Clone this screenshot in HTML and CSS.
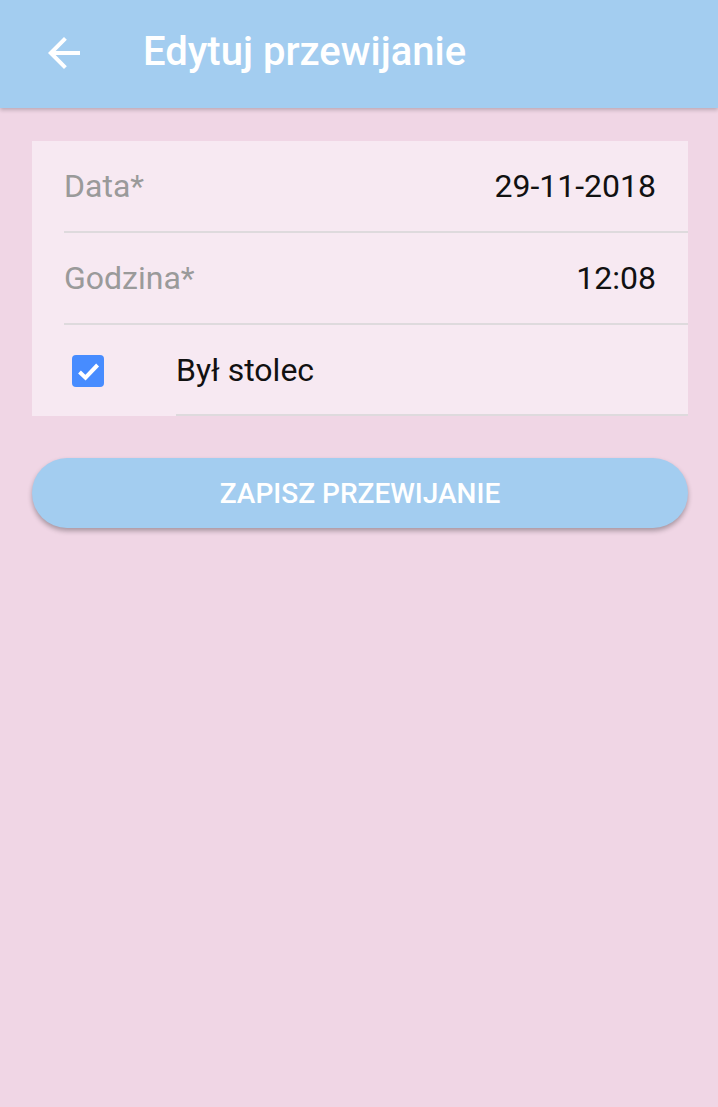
FILE: index.html
```html
<!DOCTYPE html>
<html lang="pl">
<head>
<meta charset="utf-8">
<title>Edytuj przewijanie</title>
<link rel="stylesheet" href="styles.css">
</head>
<body>
<header class="appbar">
  <button class="back" aria-label="Wstecz">
    <svg width="48" height="48" viewBox="0 0 24 24"><path fill="#fff" d="M20 11H7.83l5.59-5.59L12 4l-8 8 8 8 1.41-1.41L7.83 13H20v-2z"/></svg>
  </button>
  <h1 class="title">Edytuj przewijanie</h1>
</header>
<main class="content">
  <section class="card">
    <div class="row">
      <span class="label">Data*</span>
      <span class="value">29-11-2018</span>
    </div>
    <div class="row">
      <span class="label">Godzina*</span>
      <span class="value">12:08</span>
    </div>
    <div class="check-row">
      <div class="check-lead">
        <span class="checkbox">
          <svg width="32" height="32" viewBox="0 0 32 32"><path d="M7.5 17l6 5.6L25.6 10" fill="none" stroke="#fff" stroke-width="4"/></svg>
        </span>
      </div>
      <div class="check-title">Był stolec</div>
    </div>
  </section>
  <button class="save">ZAPISZ PRZEWIJANIE</button>
</main>
</body>
</html>
```
FILE: styles.css
```css
html, body {
  margin: 0;
  padding: 0;
}
body {
  background: #f0d6e5;
  font-family: Roboto, "Liberation Sans", sans-serif;
  width: 718px;
  min-height: 1107px;
}
.appbar {
  height: 108px;
  background: #a3cdf0;
  display: flex;
  align-items: center;
  box-shadow: 0 2px 4px rgba(0, 0, 0, 0.22);
  position: relative;
  z-index: 1;
}
.back {
  margin-left: 40px;
  width: 48px;
  height: 48px;
  padding: 0;
  border: 0;
  background: none;
  display: flex;
  margin-top: -2px;
}
.title {
  margin: -4px 0 0 55px;
  color: #fff;
  font-size: 40px;
  font-weight: 500;
  line-height: 48px;
}
.content {
  padding: 33px 30px 0 32px;
}
.card {
  background: #f7e9f2;
}
.row {
  margin-left: 32px;
  padding-right: 32px;
  height: 90px;
  display: flex;
  align-items: center;
  justify-content: space-between;
  border-bottom: 2px solid #dedadd;
  font-size: 32px;
}
.label {
  color: #9a9a9a;
}
.value {
  color: #111;
}
.check-row {
  display: flex;
  height: 91px;
}
.check-lead {
  width: 144px;
  padding-left: 40px;
  padding-top: 1px;
  box-sizing: border-box;
  display: flex;
  align-items: center;
}
.checkbox {
  width: 32px;
  height: 32px;
  border-radius: 4px;
  background: #478cff;
  display: flex;
}
.check-title {
  flex: 1;
  display: flex;
  align-items: center;
  border-bottom: 2px solid #dedadd;
  font-size: 32px;
  color: #111;
}
.save {
  display: block;
  width: 100%;
  margin-top: 42px;
  height: 70px;
  border: 0;
  border-radius: 35px;
  background: #a3cdf0;
  color: #fff;
  font-family: Roboto, "Liberation Sans", sans-serif;
  font-size: 28px;
  font-weight: 500;
  box-shadow: 0 3px 5px rgba(0, 0, 0, 0.3);
  padding: 0;
}
```
